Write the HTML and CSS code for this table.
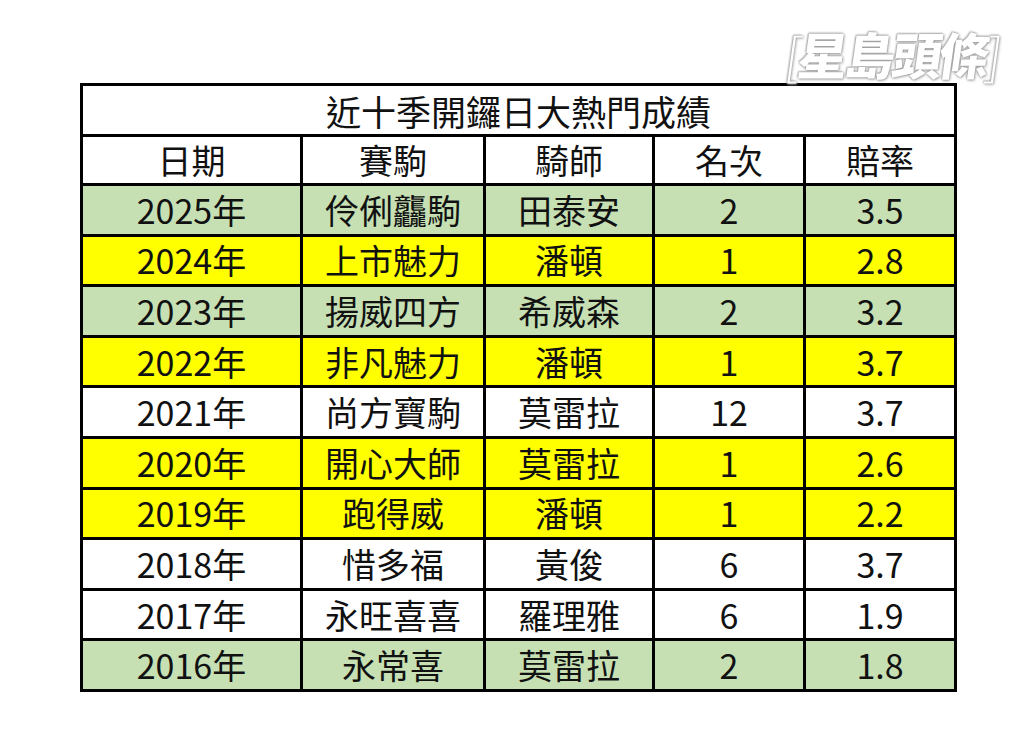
FILE: index.html
```html
<!DOCTYPE html>
<html lang="zh-Hant">
<head>
<meta charset="utf-8">
<link rel="stylesheet" href="styles.css">
</head>
<body>
<div class="logo"><span class="br">[</span>星島頭條<span class="br">]</span></div>
<table class="tbl">
  <colgroup>
    <col class="c1"><col class="c2"><col class="c3"><col class="c4"><col class="c5">
  </colgroup>
  <tr class="title"><td colspan="5">近十季開鑼日大熱門成績</td></tr>
  <tr class="head"><td>日期</td><td>賽駒</td><td>騎師</td><td>名次</td><td>賠率</td></tr>
  <tr class="g"><td>2025年</td><td>伶俐龘駒</td><td>田泰安</td><td>2</td><td>3.5</td></tr>
  <tr class="y"><td>2024年</td><td>上市魅力</td><td>潘頓</td><td>1</td><td>2.8</td></tr>
  <tr class="g"><td>2023年</td><td>揚威四方</td><td>希威森</td><td>2</td><td>3.2</td></tr>
  <tr class="y"><td>2022年</td><td>非凡魅力</td><td>潘頓</td><td>1</td><td>3.7</td></tr>
  <tr class="w"><td>2021年</td><td>尚方寶駒</td><td>莫雷拉</td><td>12</td><td>3.7</td></tr>
  <tr class="y"><td>2020年</td><td>開心大師</td><td>莫雷拉</td><td>1</td><td>2.6</td></tr>
  <tr class="y"><td>2019年</td><td>跑得威</td><td>潘頓</td><td>1</td><td>2.2</td></tr>
  <tr class="w"><td>2018年</td><td>惜多福</td><td>黃俊</td><td>6</td><td>3.7</td></tr>
  <tr class="w"><td>2017年</td><td>永旺喜喜</td><td>羅理雅</td><td>6</td><td>1.9</td></tr>
  <tr class="g"><td>2016年</td><td>永常喜</td><td>莫雷拉</td><td>2</td><td>1.8</td></tr>
</table>
</body>
</html>
```
FILE: styles.css
```css
html, body {
  margin: 0;
  padding: 0;
  background: #ffffff;
}
body {
  width: 1024px;
  height: 752px;
  position: relative;
  overflow: hidden;
  font-family: "Noto Sans CJK TC", "Noto Sans", sans-serif;
  color: #111;
}
.logo {
  position: absolute;
  top: 20px;
  left: 786px;
  font-family: "Noto Sans CJK TC", sans-serif;
  font-weight: 900;
  font-size: 50px;
  line-height: 66px;
  color: #ffffff;
  letter-spacing: -3px;
  transform: skewX(-8deg);
  text-shadow: 0 0 2px #8a8a8a, 1px 1px 3px #a8a8a8, -1px -1px 2px #c0c0c0;
}
.logo .br {
  font-weight: 300;
}
.tbl {
  margin: 83px 0 0 80px;
  border-collapse: collapse;
  border: 3px solid #000;
  table-layout: fixed;
  width: 877px;
}
.c1 { width: 220px; }
.c2 { width: 183px; }
.c3 { width: 169px; }
.c4 { width: 151px; }
.c5 { width: 151px; }
.tbl td {
  border: 3px solid #000;
  text-align: center;
  vertical-align: middle;
  font-size: 34px;
  font-weight: 400;
  line-height: 1;
  height: 47.6px;
  padding: 0;
  white-space: nowrap;
}
.tbl .title td {
  height: 48px;
  font-size: 35px;
  border-bottom-width: 2px;
}
.tbl .head td {
  height: 46px;
}
.g td { background: #c6e0b4; }
.y td { background: #ffff00; }
.w td { background: #ffffff; }
```
